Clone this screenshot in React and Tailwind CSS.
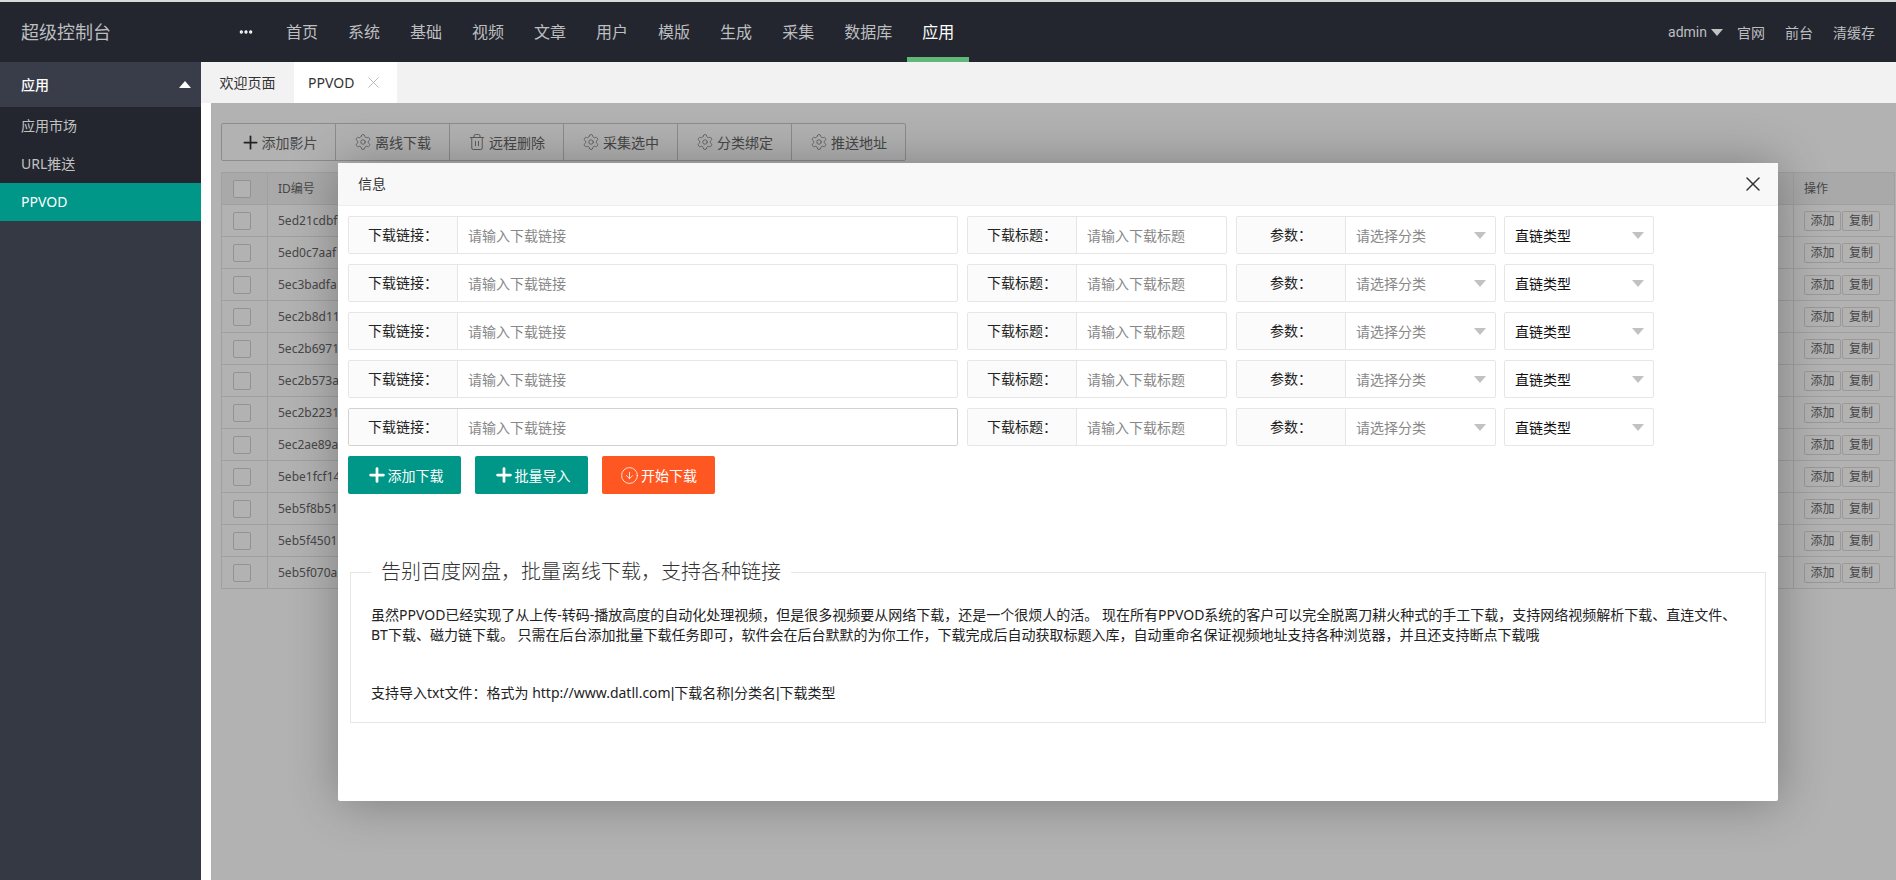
import { Plus, Settings, Trash2, X, Ellipsis, CircleArrowDown } from 'lucide-react';

const navItems = ['首页', '系统', '基础', '视频', '文章', '用户', '模版', '生成', '采集', '数据库'];

const toolButtons = [
  { label: '添加影片', icon: 'plus' },
  { label: '离线下载', icon: 'gear' },
  { label: '远程删除', icon: 'trash' },
  { label: '采集选中', icon: 'gear' },
  { label: '分类绑定', icon: 'gear' },
  { label: '推送地址', icon: 'gear' },
];

// only the part of each id that shows left of the dialog
const rows = [
  '5ed21cdbf',
  '5ed0c7aaf',
  '5ec3badfa',
  '5ec2b8d11',
  '5ec2b6971',
  '5ec2b573a',
  '5ec2b2231',
  '5ec2ae89a',
  '5ebe1fcf14',
  '5eb5f8b51',
  '5eb5f4501',
  '5eb5f070a',
];

function ToolIcon({ type }) {
  if (type === 'plus') return <Plus size={21} strokeWidth={2} className="text-[#333] -mr-[2px]" />;
  if (type === 'trash') return <Trash2 size={18} strokeWidth={1.2} className="text-[#777]" />;
  return <Settings size={18} strokeWidth={1} className="text-[#777]" />;
}

function Caret({ className }) {
  return <span className={`block w-0 h-0 border-x-[6px] border-x-transparent border-t-[7px] ${className}`}></span>;
}

function Pipe() {
  return <span className="font-['Liberation_Sans',sans-serif]">|</span>;
}

function FieldLabel({ children }) {
  return (
    <div className="w-[109px] shrink-0 h-full pb-[1px] flex items-center justify-center bg-[#fbfbfb] border-r border-[#e6e6e6] text-[#222]">
      {children}
    </div>
  );
}

function FormRow({ focused }) {
  return (
    <div className="flex h-[38px] mb-[10px] text-[14px]">
      <div className={`w-[610px] flex border rounded-[2px] ${focused ? 'border-[#d2d2d2]' : 'border-[#e6e6e6]'}`}>
        <FieldLabel>下载链接：</FieldLabel>
        <input
          placeholder="请输入下载链接"
          className="flex-1 min-w-0 pl-[10px] outline-none placeholder:text-[#888]"
        />
      </div>
      <div className="w-[260px] ml-[9px] flex border border-[#e6e6e6] rounded-[2px]">
        <FieldLabel>下载标题：</FieldLabel>
        <input
          placeholder="请输入下载标题"
          className="flex-1 min-w-0 pl-[10px] outline-none placeholder:text-[#888]"
        />
      </div>
      <div className="w-[260px] ml-[9px] flex border border-[#e6e6e6] rounded-[2px]">
        <FieldLabel>参数：</FieldLabel>
        <div className="flex-1 flex items-center justify-between pl-[10px] pr-[9px] text-[#888]">
          <span>请选择分类</span>
          <Caret className="border-t-[#c2c2c2]" />
        </div>
      </div>
      <div className="w-[150px] ml-[8px] flex items-center justify-between border border-[#e6e6e6] rounded-[2px] pl-[10px] pr-[9px] text-[#111]">
        <span>直链类型</span>
        <Caret className="border-t-[#c2c2c2]" />
      </div>
    </div>
  );
}

export default function App() {
  return (
    <div className="h-screen flex flex-col overflow-hidden bg-white text-[14px] font-['Noto_Sans','Noto_Sans_CJK_SC',sans-serif]">
      <div className="h-[2px] bg-[#d9d9d9]"></div>

      <header className="h-[60px] shrink-0 flex items-center bg-[#23262e] text-[#bdbec0]">
        <div className="w-[226px] pl-[21px] text-[18px]">超级控制台</div>
        <div className="w-[40px] mr-[5px] flex justify-center text-white">
          <Ellipsis size={16} strokeWidth={3} />
        </div>
        <nav className="flex h-full text-[16px]">
          {navItems.map((item) => (
            <a key={item} className="px-[15px] flex items-center">{item}</a>
          ))}
          <a className="relative px-[15px] flex items-center text-white">
            应用
            <span className="absolute left-0 right-0 bottom-0 h-[5px] bg-[#5fb878]"></span>
          </a>
        </nav>
        <div className="ml-auto pr-[21px] flex items-center gap-5">
          <div className="flex items-center gap-[4px] -mr-[6px]">
            <span className="font-['Roboto',sans-serif]">admin</span>
            <Caret className="border-t-[#c2c2c2]" />
          </div>
          <a>官网</a>
          <a>前台</a>
          <a>清缓存</a>
        </div>
      </header>

      <div className="flex flex-1 min-h-0">
        <aside className="w-[201px] shrink-0 bg-[#353944] text-[#c2c2c2]">
          <div className="h-[45px] pl-[21px] pr-[10px] flex items-center justify-between bg-[#393d49] text-white font-medium">
            <span>应用</span>
            <span className="block w-0 h-0 border-x-[6px] border-x-transparent border-b-[7px] border-b-white"></span>
          </div>
          <div className="bg-[#23262e]">
            <div className="h-[38px] pl-[21px] pb-[1px] flex items-center">应用市场</div>
            <div className="h-[38px] pl-[21px] pb-[1px] flex items-center">URL推送</div>
          </div>
          <div className="h-[38px] pl-[21px] pb-[1px] flex items-center bg-[#009688] text-white">PPVOD</div>
        </aside>

        <main className="flex-1 min-w-0 flex flex-col">
          <div className="h-[41px] shrink-0 flex items-stretch bg-[#f2f2f2] text-[#333]">
            <div className="w-[93px] flex items-center justify-center">欢迎页面</div>
            <div className="w-[103px] pl-[14px] flex items-center gap-[10px] bg-white">
              <span>PPVOD</span>
              <X size={19} strokeWidth={1} className="text-[#aaa]" />
            </div>
          </div>

          <div className="flex-1 min-h-0 ml-[10px] relative overflow-hidden pt-5 pl-[10px] pr-[1px] text-[#666]">
            <div className="flex h-[38px] w-[685px] border border-[#c9c9c9] rounded-[2px] text-[#666]">
              {toolButtons.map((btn) => (
                <div key={btn.label} className="flex-1 flex items-center justify-center gap-[3px] border-r border-[#c9c9c9] last:border-r-0">
                  <ToolIcon type={btn.icon} />
                  <span>{btn.label}</span>
                </div>
              ))}
            </div>

            <table className="mt-[11px] w-full table-fixed border-collapse text-[12px]">
              <colgroup>
                <col className="w-[46px]" />
                <col />
                <col className="w-[101px]" />
              </colgroup>
              <thead>
                <tr className="h-[32px] bg-[#f2f2f2]">
                  <th className="border border-[#e6e6e6]">
                    <span className="block w-[18px] h-[18px] ml-[11px] bg-white border border-[#d2d2d2] rounded-[2px]"></span>
                  </th>
                  <th className="border border-[#e6e6e6] pl-[10px] text-left font-normal">ID编号</th>
                  <th className="border border-[#e6e6e6] pl-[10px] text-left font-normal">操作</th>
                </tr>
              </thead>
              <tbody>
                {rows.map((id) => (
                  <tr key={id} className="h-[32px]">
                    <td className="border border-[#e6e6e6]">
                      <span className="block w-[18px] h-[18px] ml-[11px] bg-white border border-[#d2d2d2] rounded-[2px]"></span>
                    </td>
                    <td className="border border-[#e6e6e6] pl-[10px]">{id}</td>
                    <td className="border border-[#e6e6e6] pl-[10px]">
                      <div className="flex gap-[1px]">
                        <span className="w-[37px] h-[20px] flex items-center justify-center border border-[#dcdcdc] rounded-[2px]">添加</span>
                        <span className="w-[38px] h-[20px] flex items-center justify-center border border-[#dcdcdc] rounded-[2px]">复制</span>
                      </div>
                    </td>
                  </tr>
                ))}
              </tbody>
            </table>

            <div className="absolute inset-0 bg-black/30"></div>

            <div className="absolute left-[127px] top-[60px] w-[1440px] h-[638px] bg-white rounded-[2px] shadow-[1px_1px_50px_rgba(0,0,0,0.3)]">
              <div className="h-[43px] pb-[1px] flex items-center justify-between pl-5 pr-[13px] bg-[#f8f8f8] border-b border-[#eee] text-[#333] text-[14px]">
                <span>信息</span>
                <X size={24} strokeWidth={1.5} className="text-[#333]" />
              </div>

              <div className="px-[10px] pt-[10px]">
                <FormRow />
                <FormRow />
                <FormRow />
                <FormRow />
                <FormRow focused />

                <div className="flex gap-[14px] text-white">
                  <button className="w-[113px] h-[38px] flex items-center justify-center rounded-[2px] bg-[#009688]">
                    <Plus size={22} strokeWidth={3} />
                    添加下载
                  </button>
                  <button className="w-[113px] h-[38px] flex items-center justify-center rounded-[2px] bg-[#009688]">
                    <Plus size={22} strokeWidth={3} />
                    批量导入
                  </button>
                  <button className="w-[113px] h-[38px] flex items-center justify-center gap-[2px] rounded-[2px] bg-[#ff5722]">
                    <CircleArrowDown size={19} strokeWidth={1} />
                    开始下载
                  </button>
                </div>
              </div>

              <fieldset className="mt-[64px] ml-[12px] mr-[12px] h-[165px] border border-[#e6e6e6] pl-5 pr-5 text-[#222]">
                <legend className="px-[10px] text-[20px] font-light leading-[28px] text-[#333]">
                  告别百度网盘，批量离线下载，支持各种链接
                </legend>
                <div className="pt-[19px] leading-[19.6px]">
                  虽然PPVOD已经实现了从上传-转码-播放高度的自动化处理视频，但是很多视频要从网络下载，还是一个很烦人的活。 现在所有PPVOD系统的客户可以完全脱离刀耕火种式的手工下载，支持网络视频解析下载、直连文件、BT下载、磁力链下载。 只需在后台添加批量下载任务即可，软件会在后台默默的为你工作，下载完成后自动获取标题入库，自动重命名保证视频地址支持各种浏览器，并且还支持断点下载哦
                  <br />
                  <br />
                  <br />
                  支持导入txt文件：格式为 http://www.datll.com<Pipe />下载名称<Pipe />分类名<Pipe />下载类型
                </div>
              </fieldset>
            </div>
          </div>
        </main>
      </div>
    </div>
  );
}
